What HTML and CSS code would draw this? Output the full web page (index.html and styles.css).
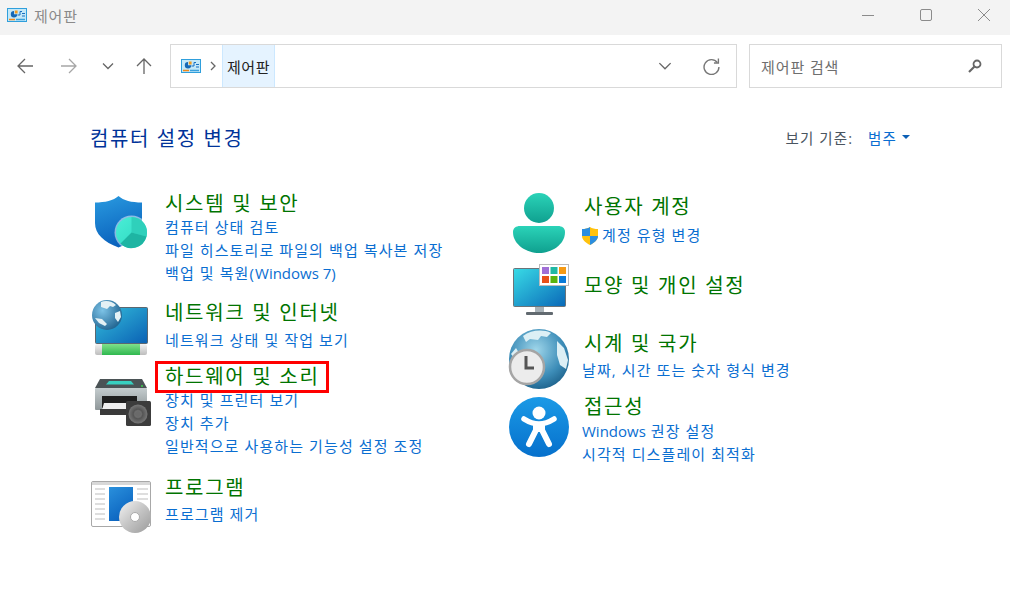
FILE: index.html
```html
<!DOCTYPE html>
<html lang="ko">
  <head>
    <meta charset="UTF-8" />
    <title>제어판</title>
    <link rel="stylesheet" href="styles.css">
  </head>
  <body>
    <!-- title bar -->
    <div class="titlebar">
      <svg class="cp-icon" viewBox="0 0 20 14"><rect x="0.500" y="0.500" width="19" height="13" fill="#c4e8f8" stroke="#2f9fdc"/><path d="M7 3a3.200 3.200 0 1 0 3.200 3.200H7z" fill="#1668b5"/><path d="M7.800 2.500h2.800v3H7.800z" fill="#f29a1f"/><path d="M10.500 7h2.500V3.500h2M15 5.500h3M15 8h3" fill="none" stroke="#1a6fc0"/><path d="M2 11.500h6" stroke="#f08a1d" stroke-width="1.500"/><path d="M9 11.500h9" stroke="#3aa0dc" stroke-width="1.500"/></svg>
      <span class="window-title">제어판</span>
      <div class="window-buttons">
        <svg viewBox="0 0 12 12"><path d="M0 6.500h12" stroke="#8b8b8b"/></svg>
        <svg viewBox="0 0 12 12"><rect x="0.500" y="0.500" width="11" height="11" rx="1.500" fill="none" stroke="#8b8b8b"/></svg>
        <svg viewBox="0 0 12 12"><path d="M0 0l12 12M12 0L0 12" stroke="#8b8b8b"/></svg>
      </div>
    </div>

    <!-- nav + address + search -->
    <div class="toolbar">
      <div class="nav-buttons">
        <svg class="nav-back" viewBox="0 0 16 16"><path d="M16 8H1M8 1L1 8l7 7" fill="none" stroke="#666" stroke-width="1.300"/></svg>
        <svg class="nav-forward" viewBox="0 0 16 16"><path d="M0 8h15M8 1l7 7-7 7" fill="none" stroke="#a6a6a6" stroke-width="1.300"/></svg>
        <svg class="nav-recent" viewBox="0 0 12 8"><path d="M1 1.500l5 5 5-5" fill="none" stroke="#666" stroke-width="1.300"/></svg>
        <svg class="nav-up" viewBox="0 0 16 16"><path d="M8 16V1M1 8l7-7 7 7" fill="none" stroke="#666" stroke-width="1.300"/></svg>
      </div>
      <div class="address">
        <svg class="cp-icon" viewBox="0 0 20 14"><rect x="0.500" y="0.500" width="19" height="13" fill="#c4e8f8" stroke="#2f9fdc"/><path d="M7 3a3.200 3.200 0 1 0 3.200 3.200H7z" fill="#1668b5"/><path d="M7.800 2.500h2.800v3H7.800z" fill="#f29a1f"/><path d="M10.500 7h2.500V3.500h2M15 5.500h3M15 8h3" fill="none" stroke="#1a6fc0"/><path d="M2 11.500h6" stroke="#f08a1d" stroke-width="1.500"/><path d="M9 11.500h9" stroke="#3aa0dc" stroke-width="1.500"/></svg>
        <svg class="crumb-sep" viewBox="0 0 6 10"><path d="M1 1l4 4-4 4" fill="none" stroke="#666" stroke-width="1.300"/></svg>
        <span class="crumb">제어판</span>
        <div class="address-tools">
          <svg class="addr-chevron" viewBox="0 0 12 8"><path d="M1 1l5 5 5-5" fill="none" stroke="#666" stroke-width="1.200"/></svg>
          <svg class="addr-refresh" viewBox="0 0 16 16"><path d="M13.500 4.200A7 7 0 1 0 15 8.500" fill="none" stroke="#777" stroke-width="1.300"/><path d="M14.500 0.500v4.200h-4.200" fill="none" stroke="#777" stroke-width="1.300"/></svg>
        </div>
      </div>
      <div class="search">
        <span class="search-text">제어판 검색</span>
        <svg class="search-icon" viewBox="0 0 14 14"><circle cx="9" cy="5" r="3.500" fill="none" stroke="#666" stroke-width="1.800"/><path d="M6.500 7.500L1 13" stroke="#666" stroke-width="2.200"/></svg>
      </div>
    </div>

    <!-- content -->
    <div class="content">
      <div class="content-head">
        <h1>컴퓨터 설정 변경</h1>
        <div class="view-by">
          <span>보기 기준:</span>
          <a class="view-mode">범주</a>
          <i class="caret"></i>
        </div>
      </div>

      <div class="columns">
        <div class="column column-left">
          <div class="cat cat-system">
            <svg class="cat-icon" viewBox="0 0 64 64">
              <defs>
                <linearGradient id="sh" x1="0" y1="0" x2="0.300" y2="1"><stop offset="0" stop-color="#2a9be0"/><stop offset="1" stop-color="#0a62bd"/></linearGradient>
                <linearGradient id="pie" x1="0" y1="0" x2="1" y2="1"><stop offset="0" stop-color="#4aeed6"/><stop offset="1" stop-color="#2bd6c0"/></linearGradient>
              </defs>
              <path d="M28.500 5c5 4.500 13 6.500 23.500 6.500V34c0 9-9 17-23.500 22.500C14 51 5 43 5 32V11.500c10 0 18.500-2 23.500-6.500z" fill="url(#sh)"/>
              <circle cx="41.500" cy="41.500" r="17" fill="#fff" fill-opacity="0.500"/>
              <circle cx="41.500" cy="41.500" r="15.500" fill="url(#pie)"/>
              <path d="M41.500 41.500V26a15.500 15.500 0 0 1 15 19.500z" fill="#2fd0bb"/>
              <path d="M41.500 41.500l15 4a15.500 15.500 0 0 1-26 7z" fill="#1eb5a3"/>
            </svg>
            <div class="cat-text">
              <h2>시스템 및 보안</h2>
              <a>컴퓨터 상태 검토</a>
              <a>파일 히스토리로 파일의 백업 복사본 저장</a>
              <a>백업 및 복원(<span class="latin">Windows 7</span>)</a>
            </div>
          </div>

          <div class="cat cat-network">
            <svg class="cat-icon" viewBox="0 0 64 64">
              <defs>
                <linearGradient id="scr1" x1="0" y1="0" x2="1" y2="1"><stop offset="0" stop-color="#35c0dc"/><stop offset="1" stop-color="#0a60b4"/></linearGradient>
                <radialGradient id="glb1" cx="0.350" cy="0.350" r="0.750"><stop offset="0" stop-color="#7cc2e6"/><stop offset="1" stop-color="#1c5f8c"/></radialGradient>
                <linearGradient id="lan" x1="0" y1="0" x2="0" y2="1"><stop offset="0" stop-color="#7fe08a"/><stop offset="1" stop-color="#2fb84f"/></linearGradient>
                <linearGradient id="lanbase" x1="0" y1="0" x2="0" y2="1"><stop offset="0" stop-color="#f2f2f2"/><stop offset="1" stop-color="#bdbdbd"/></linearGradient>
              </defs>
              <rect x="5.500" y="9.500" width="52" height="36" rx="1" fill="url(#scr1)" stroke="#5b6770"/>
              <rect x="5" y="46" width="52" height="11" rx="2" fill="url(#lanbase)"/>
              <rect x="12" y="46" width="38" height="11" fill="url(#lan)"/>
              <circle cx="17" cy="17" r="15" fill="url(#glb1)"/>
              <path d="M11 4c5-2 11-1 15 3l-3 2-3-1-3 3-6-2zM25 15l5-2 1 6-3 5-3-4zM5 20l7 1 5 5-2 2-6-3z" fill="#e4f1f5"/>
            </svg>
            <div class="cat-text">
              <h2>네트워크 및 인터넷</h2>
              <a>네트워크 상태 및 작업 보기</a>
            </div>
          </div>

          <div class="cat cat-hardware">
            <svg class="cat-icon" viewBox="0 0 64 64">
              <defs>
                <linearGradient id="prn" x1="0" y1="0" x2="0" y2="1"><stop offset="0" stop-color="#c4ccce"/><stop offset="1" stop-color="#8f9799"/></linearGradient>
                <radialGradient id="spk"><stop offset="0" stop-color="#a8a8a8"/><stop offset="0.500" stop-color="#555"/><stop offset="1" stop-color="#777"/></radialGradient>
              </defs>
              <path d="M10 17h42l5 9H5z" fill="#4b5356"/>
              <path d="M19 19h22l3 3.500H16z" fill="#38d0c0"/>
              <circle cx="52" cy="24" r="1" fill="#3bd04b"/>
              <rect x="5" y="26" width="52" height="22" rx="1" fill="url(#prn)"/>
              <rect x="12" y="34" width="35" height="12" fill="#1f1f1f"/>
              <path d="M14 41h32l2 7H12z" fill="#eee"/>
              <rect x="10" y="47" width="37" height="6" fill="#3a3a3a"/>
              <rect x="36" y="39" width="25" height="25" rx="1.500" fill="#3c3c3c"/>
              <circle cx="48" cy="52" r="9.500" fill="url(#spk)"/>
              <circle cx="48" cy="52" r="3" fill="#6a6a6a"/>
            </svg>
            <div class="cat-text">
              <h2 class="marked">하드웨어 및 소리</h2>
              <a>장치 및 프린터 보기</a>
              <a>장치 추가</a>
              <a>일반적으로 사용하는 기능성 설정 조정</a>
            </div>
          </div>

          <div class="cat cat-program">
            <svg class="cat-icon" viewBox="0 0 64 64">
              <defs>
                <linearGradient id="box" x1="0" y1="0" x2="0.500" y2="1"><stop offset="0" stop-color="#2a90dc"/><stop offset="1" stop-color="#0b63bf"/></linearGradient>
                <linearGradient id="cd" x1="0" y1="0" x2="1" y2="1"><stop offset="0" stop-color="#f4f4f4"/><stop offset="0.500" stop-color="#c4c4c4"/><stop offset="1" stop-color="#9a9a9a"/></linearGradient>
              </defs>
              <rect x="1.500" y="6.500" width="59" height="45" rx="1.500" fill="#fff" stroke="#a8a8a8"/>
              <path d="M2 8.500h58" stroke="#d8d8d8" stroke-width="3"/>
              <path d="M5 14h10M5 19h10M5 24h10M5 29h10M5 34h10M5 39h10M5 44h10M47 14h11M47 19h11M47 24h11" stroke="#bdbdbd"/>
              <rect x="19" y="12" width="24" height="34" fill="url(#box)"/>
              <circle cx="45" cy="42" r="16" fill="url(#cd)"/>
              <circle cx="45" cy="42" r="4.500" fill="#fff" stroke="#aaa"/>
            </svg>
            <div class="cat-text">
              <h2>프로그램</h2>
              <a>프로그램 제거</a>
            </div>
          </div>
        </div>

        <div class="column column-right">
          <div class="cat cat-user">
            <svg class="cat-icon" viewBox="0 0 64 64">
              <defs>
                <linearGradient id="usr" x1="0" y1="0" x2="0" y2="1"><stop offset="0" stop-color="#2bd3b8"/><stop offset="1" stop-color="#0fa08f"/></linearGradient>
              </defs>
              <circle cx="32" cy="17" r="15" fill="url(#usr)"/>
              <path d="M6 41c0-4 3-6 7-6h38c4 0 7 2 7 6 0 13-14 21-26 21S6 54 6 41z" fill="url(#usr)"/>
            </svg>
            <div class="cat-text">
              <h2>사용자 계정</h2>
              <a class="with-shield"><svg class="shield" viewBox="0 0 18 18"><path d="M9 0c2 1.500 5 2 8 2v7c0 4-4 7-8 9-4-2-8-5-8-9V2c3 0 6-.5 8-2z" fill="#ffc20e"/><path d="M9 0v9H1V2c3 0 6-.5 8-2z" fill="#2b8ee0"/><path d="M9 9h8c0 4-4 7-8 9z" fill="#2b8ee0"/></svg>계정 유형 변경</a>
            </div>
          </div>

          <div class="cat cat-appearance">
            <svg class="cat-icon" viewBox="0 0 64 64">
              <defs>
                <linearGradient id="scr2" x1="0" y1="0" x2="1" y2="1"><stop offset="0" stop-color="#38dbe6"/><stop offset="1" stop-color="#0a68b8"/></linearGradient>
              </defs>
              <rect x="6.500" y="4.500" width="52" height="38" rx="1" fill="url(#scr2)" stroke="#6b7479"/>
              <rect x="28" y="43" width="9" height="5" fill="#a8b2b8"/>
              <rect x="19" y="48" width="27" height="3" rx="1" fill="#626a70"/>
              <rect x="32.500" y="0.500" width="29" height="21" fill="#fff" stroke="#bbb"/>
              <rect x="35" y="3" width="7" height="7" fill="#a06fd6"/>
              <rect x="43.500" y="3" width="7" height="7" fill="#1fb8a4"/>
              <rect x="52" y="3" width="7" height="7" fill="#f59a14"/>
              <rect x="35" y="12" width="7" height="7" fill="#e8501a"/>
              <rect x="43.500" y="12" width="7" height="7" fill="#5ab40e"/>
              <rect x="52" y="12" width="7" height="7" fill="#0a7bd8"/>
            </svg>
            <div class="cat-text">
              <h2>모양 및 개인 설정</h2>
            </div>
          </div>

          <div class="cat cat-clock">
            <svg class="cat-icon" viewBox="0 0 64 64">
              <defs>
                <radialGradient id="glb2" cx="0.450" cy="0.350" r="0.750"><stop offset="0" stop-color="#9fd6ea"/><stop offset="0.600" stop-color="#3d8db8"/><stop offset="1" stop-color="#14557e"/></radialGradient>
              </defs>
              <circle cx="32" cy="31" r="30" fill="url(#glb2)"/>
              <path d="M16 8c8-6 20-7 28-3l-4 4-6-1-3 4-8-1-4 3zM50 13l7 7 4 12-2 9-6-4-3-10zM4 26l5-6 3 5-4 6z" fill="#dceff5"/>
              <circle cx="20" cy="39" r="17" fill="#ececec" stroke="#a5a5a5" stroke-width="2.500"/>
              <path d="M19 28v12h8" fill="none" stroke="#555" stroke-width="3"/>
            </svg>
            <div class="cat-text">
              <h2>시계 및 국가</h2>
              <a>날짜, 시간 또는 숫자 형식 변경</a>
            </div>
          </div>

          <div class="cat cat-access">
            <svg class="cat-icon" viewBox="0 0 64 64">
              <defs>
                <linearGradient id="acc" x1="0" y1="0" x2="0" y2="1"><stop offset="0" stop-color="#1b9ae6"/><stop offset="1" stop-color="#0670cc"/></linearGradient>
              </defs>
              <circle cx="32" cy="33" r="30" fill="url(#acc)"/>
              <circle cx="32" cy="19" r="6.500" fill="#fff"/>
              <path d="M17 25Q25 30 32 30T47 25" fill="none" stroke="#fff" stroke-width="5.500" stroke-linecap="round"/>
              <path d="M26 29h12v9H26z" fill="#fff"/>
              <path d="M29 36L22 50M35 36L42 50" fill="none" stroke="#fff" stroke-width="6" stroke-linecap="round"/>
            </svg>
            <div class="cat-text">
              <h2>접근성</h2>
              <a class="latin-link"><span class="latin">Windows</span> 권장 설정</a>
              <a>시각적 디스플레이 최적화</a>
            </div>
          </div>
        </div>
      </div>
    </div>
  </body>
</html>
```

FILE: styles.css
```css
body {
  margin: 0;
  background: #fff;
  font-family: "Open Sans", "Noto Sans CJK KR", sans-serif;
  color: #333;
  overflow: hidden;
}

svg {
  display: block;
  flex: none;
}

.cp-icon {
  width: 20px;
  height: 14px;
}

/* title bar */
.titlebar {
  height: 35px;
  box-sizing: border-box;
  padding: 0 0 5px 7px;
  background: #f3f3f3;
  display: flex;
  align-items: center;
}

.window-title {
  margin-left: 7px;
  font-size: 15px;
  color: #8a8a8a;
  letter-spacing: 0.8px;
}

.window-buttons {
  margin-left: auto;
  display: flex;
  gap: 46px;
  padding-right: 20px;
}

.window-buttons svg {
  width: 12px;
  height: 12px;
}

/* toolbar */
.toolbar {
  height: 62px;
  display: flex;
  align-items: center;
}

.nav-buttons {
  width: 170px;
  display: flex;
  align-items: center;
  flex: none;
  padding-left: 17px;
  box-sizing: border-box;
}

.nav-back,
.nav-forward,
.nav-up {
  width: 16px;
  height: 16px;
}

.nav-forward {
  margin-left: 28px;
}

.nav-recent {
  width: 12px;
  height: 8px;
  margin-left: 25px;
}

.nav-up {
  margin-left: 22px;
}

.address,
.search {
  height: 44px;
  box-sizing: border-box;
  border: 1px solid #d9d9d9;
  display: flex;
  align-items: center;
}

.address {
  width: 567px;
  padding-left: 10px;
}

.crumb-sep {
  width: 6px;
  height: 10px;
  margin-left: 9px;
}

.crumb {
  height: 42px;
  width: 53px;
  box-sizing: border-box;
  margin-left: 6px;
  background: #e5f3ff;
  border: 1px solid #cce8ff;
  border-width: 0 1px;
  font-size: 15px;
  letter-spacing: 0.6px;
  color: #222;
  display: flex;
  align-items: center;
  justify-content: center;
}

.address-tools {
  margin-left: auto;
  display: flex;
  align-items: center;
  gap: 31px;
  padding-right: 16px;
}

.addr-chevron {
  width: 14px;
  height: 9px;
}

.addr-refresh {
  width: 17px;
  height: 17px;
}

.search {
  width: 253px;
  margin-left: 12px;
  padding: 0 19px 0 11px;
  justify-content: space-between;
}

.search-text {
  font-size: 15px;
  color: #6e6e6e;
  letter-spacing: 0.9px;
}

.search-icon {
  width: 14px;
  height: 14px;
}

/* main area */
.content {
  padding: 0 100px 0 90px;
}

.content-head {
  height: 94px;
  padding-top: 28px;
  box-sizing: border-box;
  display: flex;
  justify-content: space-between;
  align-items: flex-start;
}

h1 {
  margin: 0;
  font-size: 20px;
  font-weight: 400;
  line-height: 28px;
  color: #003399;
  letter-spacing: 1.6px;
}

.view-by {
  display: flex;
  align-items: center;
  height: 24px;
  font-size: 14.5px;
  letter-spacing: 1.1px;
  color: #4a5560;
}

.view-mode {
  margin-left: 15px;
  color: #0a6ed1;
}

.caret {
  margin-left: 5px;
  border: 4px solid transparent;
  border-top: 4px solid #0b5fb5;
  border-bottom: 0;
}

.columns {
  display: flex;
}

.column {
  flex: none;
  width: 417px;
}

.cat {
  display: flex;
  align-items: flex-start;
}

.cat-icon {
  width: 64px;
  height: 64px;
}

.cat-text {
  margin-left: 11px;
}

.cat-text a {
  display: block;
  font-size: 15px;
  line-height: 23.2px;
  letter-spacing: 1.1px;
  color: #0a6ed1;
  white-space: nowrap;
}

.latin {
  letter-spacing: 0;
}

h2 {
  margin: 0;
  font-size: 20px;
  font-weight: 400;
  line-height: 28px;
  color: #007400;
  letter-spacing: 1.7px;
  white-space: nowrap;
  position: relative;
}

/* red annotation box drawn over the screenshot */
.marked {
  width: max-content;
}

.marked::after {
  content: "";
  position: absolute;
  left: -10px;
  right: -9px;
  top: -2px;
  bottom: -2px;
  border: 3px solid #f00;
}

/* rows in the reference are not evenly spaced */
.cat-system { height: 107px; }
.cat-network { height: 64px; }
.cat-hardware { height: 113px; }
.cat-program { height: 64px; }

.cat-user { height: 79px; }
.cat-appearance { height: 60px; }
.cat-clock { height: 64px; }
.cat-access { height: 64px; }

.cat-system h2 { margin: -1px 0 -2px; }
.cat-network h2 { margin: 1px 0 2px; }
.cat-hardware h2 { margin: 1px 0 -2px; }
.cat-program h2 { margin: -1px 0 1px; }

.cat-user h2 { margin: 2px 0 3px; }
.cat-appearance h2 { margin: 2px 0 0; }
.cat-clock h2 { margin: 0 0 1px; }
.cat-access h2 { margin: -1px 0 -1px; }

.column-right h2 { padding-left: 2px; }

.cat-appearance .cat-icon { margin-top: -6px; }
.cat-clock .cat-icon { margin-top: -2px; }

.with-shield {
  display: flex !important;
  align-items: center;
}

.shield {
  width: 18px;
  height: 18px;
  margin: 0 3px 0 -1px;
}
```
